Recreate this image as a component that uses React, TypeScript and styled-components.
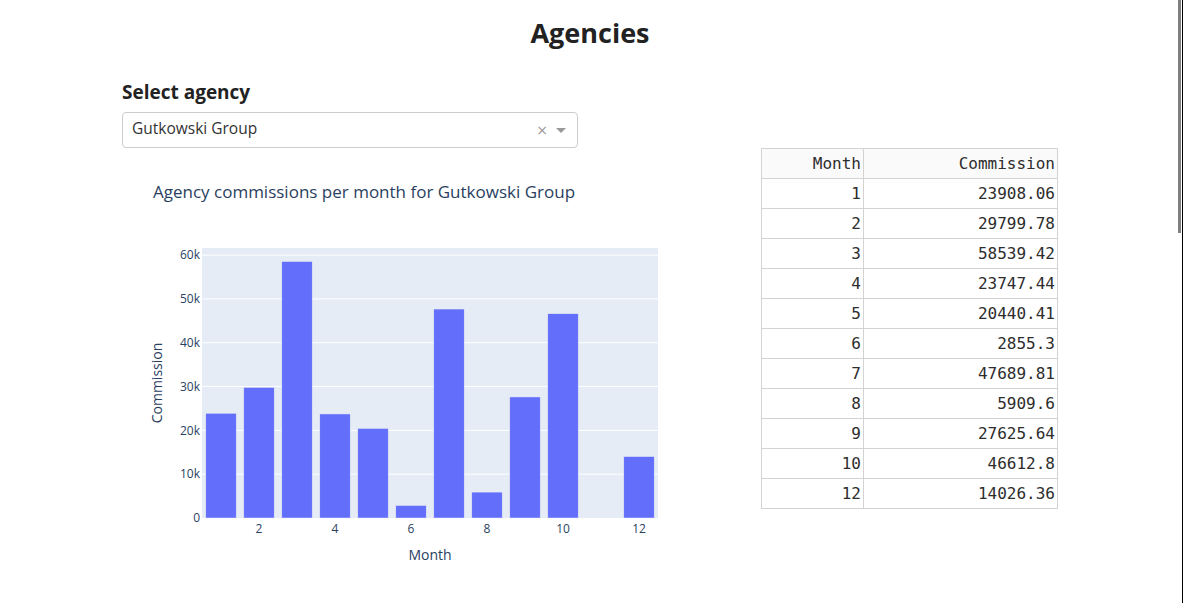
import React from "react";
import styled, { createGlobalStyle } from "styled-components";

const GlobalStyle = createGlobalStyle`
  html, body {
    margin: 0;
    padding: 0;
    overflow: hidden;
    background: #fff;
  }
  body {
    font-family: "Open Sans", "Noto Sans", sans-serif;
    color: #222;
  }
`;

interface Row {
  month: number;
  commission: number;
}

const rows: Row[] = [
  { month: 1, commission: 23908.06 },
  { month: 2, commission: 29799.78 },
  { month: 3, commission: 58539.42 },
  { month: 4, commission: 23747.44 },
  { month: 5, commission: 20440.41 },
  { month: 6, commission: 2855.3 },
  { month: 7, commission: 47689.81 },
  { month: 8, commission: 5909.6 },
  { month: 9, commission: 27625.64 },
  { month: 10, commission: 46612.8 },
  { month: 12, commission: 14026.36 },
];

const agency = "Gutkowski Group";

// figure geometry, same as plotly defaults (450 high, margins 80/80/100/80)
const FIG_W = 615;
const FIG_H = 450;
const PL = 80;
const PT = 100;
const PW = 456;
const PH = 270;
const Y_MAX = 61620;

const xPos = (m: number) => PL + ((m - 0.5) / 12) * PW;
const yPos = (v: number) => PT + PH - (v / Y_MAX) * PH;

const CommissionChart = () => {
  const yTicks = [0, 10000, 20000, 30000, 40000, 50000, 60000];
  const xTicks = [2, 4, 6, 8, 10, 12];
  const barW = (PW / 12) * 0.8;

  return (
    <svg width={FIG_W} height={FIG_H} viewBox={`0 0 ${FIG_W} ${FIG_H}`}>
      <rect x={PL} y={PT} width={PW} height={PH} fill="#e5ecf6" />
      {yTicks.slice(1).map((t) => (
        <line
          key={t}
          x1={PL}
          x2={PL + PW}
          y1={yPos(t)}
          y2={yPos(t)}
          stroke="#fff"
          strokeWidth={1}
        />
      ))}
      {rows.map((r) => (
        <rect
          key={r.month}
          x={xPos(r.month) - barW / 2}
          y={yPos(r.commission)}
          width={barW}
          height={PT + PH - yPos(r.commission)}
          fill="#636efa"
          stroke="#e5ecf6"
          strokeWidth={0.5}
        />
      ))}
      <g fontFamily="'Open Sans', 'Noto Sans', sans-serif" fill="#2a3f5f">
        <text x={31} y={49.5} fontSize={17}>
          Agency commissions per month for {agency}
        </text>
        {yTicks.map((t) => (
          <text
            key={t}
            x={PL - 2}
            y={yPos(t) + 4.2}
            fontSize={12}
            textAnchor="end"
          >
            {t === 0 ? "0" : `${t / 1000}k`}
          </text>
        ))}
        {xTicks.map((t) => (
          <text
            key={t}
            x={xPos(t)}
            y={PT + PH + 14.5}
            fontSize={12}
            textAnchor="middle"
          >
            {t}
          </text>
        ))}
        <text x={PL + PW / 2} y={412} fontSize={14} textAnchor="middle">
          Month
        </text>
        <text
          x={0}
          y={0}
          fontSize={14}
          textAnchor="middle"
          transform={`translate(39.5 ${PT + PH / 2}) rotate(-90)`}
        >
          Commission
        </text>
      </g>
    </svg>
  );
};

const App = () => {
  return (
    <>
      <GlobalStyle />
      <Page>
        <Title>Agencies</Title>
        <Label>Select agency</Label>
        <Dropdown>
          <DropdownValue>{agency}</DropdownValue>
          <ClearButton>×</ClearButton>
          <Arrow />
        </Dropdown>
        <ContentRow>
          <ChartBox>
            <CommissionChart />
          </ChartBox>
          <Table>
            <colgroup>
              <col style={{ width: 102 }} />
              <col style={{ width: 194 }} />
            </colgroup>
            <thead>
              <tr>
                <HeadCell>Month</HeadCell>
                <HeadCell>Commission</HeadCell>
              </tr>
            </thead>
            <tbody>
              {rows.map((r) => (
                <tr key={r.month}>
                  <Cell>{r.month}</Cell>
                  <Cell>{r.commission}</Cell>
                </tr>
              ))}
            </tbody>
          </Table>
        </ContentRow>
      </Page>
      <WindowEdge>
        <ScrollThumb />
      </WindowEdge>
    </>
  );
};

const Page = styled.div`
  width: 936px;
  padding: 0 0 0 122px;
`;

const Title = styled.h1`
  margin: 0;
  padding-top: 14px;
  height: 44px;
  font-size: 27px;
  line-height: 38px;
  font-weight: 700;
  text-align: center;
  color: #222;
`;

const Label = styled.div`
  margin-top: 20px;
  height: 34px;
  font-size: 19px;
  line-height: 28px;
  font-weight: 700;
  color: #222;
`;

const Dropdown = styled.div`
  box-sizing: border-box;
  width: 456px;
  height: 36px;
  border: 1px solid #ccc;
  border-radius: 4px;
  display: flex;
  align-items: center;
  padding: 0 11px 0 9px;
  background: #fff;
`;

const DropdownValue = styled.div`
  flex: 1;
  font-size: 15.5px;
  color: #333;
  line-height: 30px;
  padding-bottom: 4px;
`;

const ClearButton = styled.span`
  color: #999;
  font-size: 14px;
  line-height: 1;
  margin-right: 8px;
  font-family: "DejaVu Sans", sans-serif;
`;

const Arrow = styled.span`
  width: 0;
  height: 0;
  border-style: solid;
  border-width: 5px 5px 2.5px;
  border-color: #999 transparent transparent;
  margin-top: 3px;
`;

const ContentRow = styled.div`
  display: flex;
  justify-content: space-between;
  align-items: flex-start;
`;

const ChartBox = styled.div`
  width: 615px;
  height: 450px;
  svg {
    display: block;
  }
`;

const Table = styled.table`
  width: 297px;
  table-layout: fixed;
  border-collapse: collapse;
  font-family: "DejaVu Sans Mono", monospace;
  font-size: 16px;
  color: #2d2d2d;
`;

const HeadCell = styled.th`
  height: 29px;
  padding: 0 2px;
  text-align: right;
  font-weight: 400;
  background: #fafafa;
  border: 1px solid #d3d3d3;
`;

const Cell = styled.td`
  height: 29px;
  padding: 0 2px;
  text-align: right;
  border: 1px solid #d3d3d3;
  background: #fff;
`;

const WindowEdge = styled.div`
  position: fixed;
  top: 0;
  right: 0;
  width: 5px;
  height: 100%;
  border-right: 1px solid #000;
  box-sizing: border-box;
`;

const ScrollThumb = styled.div`
  width: 3px;
  height: 233px;
  background: #808080;
`;

export default App;
